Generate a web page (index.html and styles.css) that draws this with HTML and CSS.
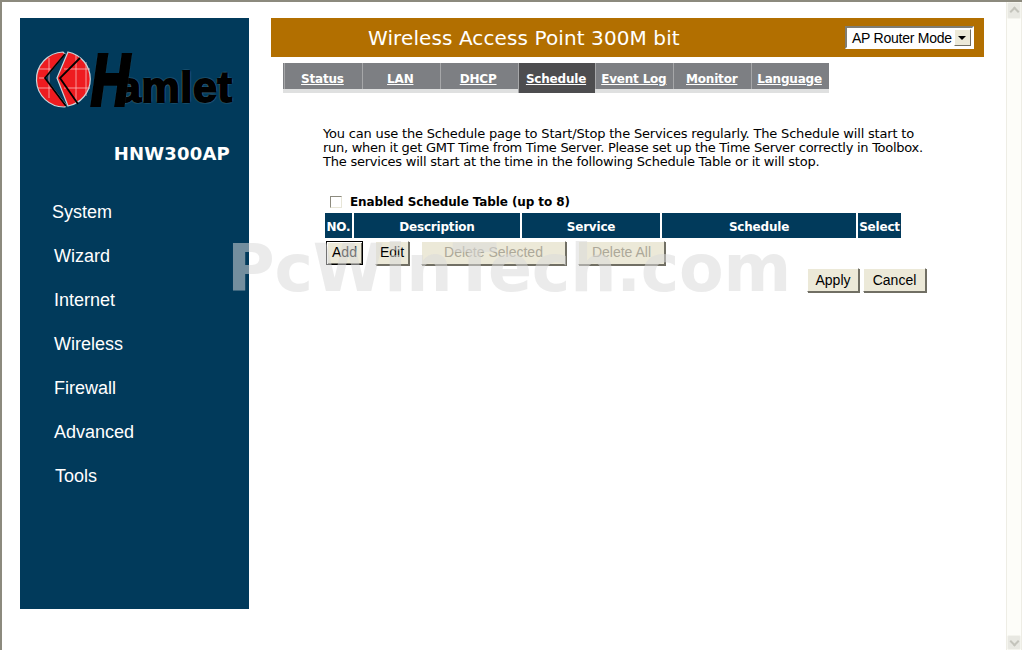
FILE: index.html
```html
<!DOCTYPE html>
<html lang="en">

<head>
    <meta charset="UTF-8">
    <meta name="viewport" content="width=device-width, initial-scale=1.0">
    <title>Schedule</title>
    <link rel="stylesheet" href="styles.css">
</head>

<body>
    <div class="page">
        <div class="left-bar">
            <div class="logo">
                <svg class="globe" width="60" height="62" viewBox="0 0 60 62">
                    <g fill="#ee1c20" stroke="#c9d6dc" stroke-width="1.2">
                        <path d="M28 2 A27.5 27.5 0 0 0 30 57 L31 55 L10 28 L30 4 Z"/>
                        <path d="M33 2 L22 28 L33 56 A27.5 27.5 0 0 0 33 2 Z"/>
                    </g>
                    <g fill="none" stroke="#f9b9b9" stroke-width="0.8">
                        <path d="M3 19 H16 M3 38 H17 M29 19 H55 M29 38 H55 M14 8 V48 M41 5 V53 M51 12 V46 M4 28 H9"/>
                    </g>
                    <path d="M30 4 L10 28 L31 56 M45 8 L25 28 L43 54" fill="none" stroke="#000" stroke-width="1.8"/>
                </svg>
                <span class="logo-h">H</span>
                <span class="logo-name">amlet</span>
            </div>
            <div class="model">HNW300AP</div>
            <ul class="menu">
                <li class="menu-first">System</li>
                <li>Wizard</li>
                <li>Internet</li>
                <li>Wireless</li>
                <li>Firewall</li>
                <li>Advanced</li>
                <li class="menu-last">Tools</li>
            </ul>
        </div>

        <div class="right-bar">
            <div class="title-bar">
                <div class="title">Wireless Access Point 300M bit</div>
                <div class="mode-select">
                    <span class="mode-text">AP Router Mode</span>
                    <span class="mode-arrow"></span>
                </div>
            </div>

            <div class="tabs">
                <a class="tab">Status</a>
                <a class="tab">LAN</a>
                <a class="tab">DHCP</a>
                <a class="tab active">Schedule</a>
                <a class="tab">Event Log</a>
                <a class="tab">Monitor</a>
                <a class="tab">Language</a>
            </div>

            <div class="content">
                <div class="intro">
                    <p class="line-1">You can use the Schedule page to Start/Stop the Services regularly. The Schedule will start to</p>
                    <p class="line-2">run, when it get GMT Time from Time Server. Please set up the Time Server correctly in Toolbox.</p>
                    <p class="line-3">The services will start at the time in the following Schedule Table or it will stop.</p>
                </div>

                <div class="enable">
                    <span class="check"></span>
                    <span class="enable-text">Enabled Schedule Table (up to 8)</span>
                </div>

                <table class="sched">
                    <tr>
                        <th class="c-no">NO.</th>
                        <th class="c-desc">Description</th>
                        <th class="c-serv">Service</th>
                        <th class="c-sched">Schedule</th>
                        <th class="c-sel">Select</th>
                    </tr>
                </table>

                <div class="btn-row">
                    <button class="btn btn-add">Add</button>
                    <button class="btn btn-edit">Edit</button>
                    <button class="btn btn-delsel off">Delete Selected</button>
                    <button class="btn btn-delall off">Delete All</button>
                </div>

                <div class="btn-row2">
                    <button class="btn btn-apply">Apply</button>
                    <button class="btn btn-cancel">Cancel</button>
                </div>
            </div>
        </div>
    </div>

    <div class="scrollbar">
        <div class="sb-btn sb-up"></div>
        <div class="sb-btn sb-down"></div>
    </div>

    <div class="watermark">PcWinTech.com</div>
</body>

</html>
```

FILE: styles.css
```css
* {
    padding: 0;
    margin: 0;
    box-sizing: border-box;
}

html,
body {
    height: 650px;
    overflow: hidden;
}

body {
    display: flex;
    background-color: #fff;
    border-top: 2px solid #8c8a7e;
    border-left: 2px solid #8c8a7e;
    font-family: "DejaVu Sans", Verdana, sans-serif;
    position: relative;
}

.page {
    flex: 1;
    display: flex;
    padding: 16px 0 0 18px;
}

.left-bar {
    width: 229px;
    height: 591px;
    background-color: #013a5b;
    flex-shrink: 0;
}

.logo {
    display: flex;
    margin: 32px 0 0 15px;
    height: 62px;
    font-family: "Liberation Sans", Arial, sans-serif;
    font-weight: bold;
    color: #000;
    text-shadow: 0 0 2px #d5e0e5, 0 0 2px #d5e0e5;
}

.globe {
    flex-shrink: 0;
}

.logo-h {
    font-size: 72px;
    line-height: 60px;
    font-style: italic;
    -webkit-text-stroke: 4px #000;
    transform: scaleX(0.74);
    transform-origin: left center;
    width: 26px;
    margin-left: -4px;
}

.logo-name {
    font-size: 43px;
    line-height: 62px;
    letter-spacing: 0.6px;
    -webkit-text-stroke: 2px #000;
    padding-top: 6px;
}

.model {
    margin-top: 31px;
    padding-right: 19px;
    text-align: right;
    color: #fff;
    font-size: 18px;
    letter-spacing: 0.2px;
    font-weight: bold;
    line-height: 22px;
}

.menu {
    list-style: none;
    margin-top: 35px;
}

.menu li {
    padding-left: 34px;
    height: 44px;
    line-height: 24px;
    color: #fff;
    font-family: "Liberation Sans", Arial, sans-serif;
    font-size: 18px;
}

.menu .menu-first {
    padding-left: 32px;
}

.menu .menu-last {
    padding-left: 35px;
}

.right-bar {
    width: 713px;
    margin-left: 22px;
}

.title-bar {
    height: 39px;
    background-color: #b26f00;
    display: flex;
    align-items: center;
    justify-content: space-between;
    padding: 0 10px 0 97px;
}

.title {
    color: #fff;
    font-size: 20px;
    letter-spacing: 0.1px;
}

.mode-select {
    width: 129px;
    height: 23px;
    background-color: #fff;
    border: 2px solid;
    border-color: #7f7d73 #fff #fff #7f7d73;
    display: flex;
    align-items: center;
    justify-content: space-between;
    padding: 0 1px 0 5px;
    font-family: "Liberation Sans", Arial, sans-serif;
    font-size: 14px;
    letter-spacing: -0.25px;
}

.mode-text {
    white-space: nowrap;
}

.mode-arrow {
    width: 17px;
    height: 17px;
    background-color: #ece9d8;
    border: 1px solid;
    border-color: #fff #716f64 #716f64 #fff;
    position: relative;
    flex-shrink: 0;
}

.mode-arrow::after {
    content: "";
    position: absolute;
    left: 3px;
    top: 6px;
    border: 4px solid transparent;
    border-top: 4px solid #000;
    border-bottom: 0;
}

.tabs {
    display: flex;
    width: 546px;
    height: 30px;
    margin: 6px 0 0 12px;
    background-color: #7d7f83;
    border-bottom: 4px solid #dfe0e0;
    padding-left: 1px;
}

.tab {
    width: 78px;
    height: 26px;
    line-height: 33px;
    padding-right: 2px;
    text-align: center;
    color: #fff;
    font-size: 12px;
    letter-spacing: -0.2px;
    font-weight: bold;
    text-decoration: underline;
    border-left: 1px solid #a6a7a9;
    white-space: nowrap;
}

.tab.active {
    background-color: #4d4d4f;
    height: 30px;
}

.intro {
    margin: 34px 0 0 52px;
    font-size: 13px;
    line-height: 14px;
    color: #000;
    white-space: nowrap;
}

.line-1 { letter-spacing: -0.18px; }
.line-2 { letter-spacing: -0.275px; }
.line-3 { letter-spacing: -0.23px; }

.enable {
    display: flex;
    align-items: center;
    margin: 24px 0 0 59px;
    height: 18px;
}

.check {
    width: 12px;
    height: 12px;
    border: 1px solid;
    border-color: #8c8a7e #e8e6d8 #e8e6d8 #8c8a7e;
    background-color: #fff;
}

.enable-text {
    margin-left: 8px;
    font-size: 12px;
    letter-spacing: -0.1px;
    font-weight: bold;
}

.sched {
    margin: 0 0 0 52px;
    border-collapse: separate;
    border-spacing: 2px;
    table-layout: fixed;
    width: 580px;
}

.sched th {
    height: 25px;
    padding: 2px 0 0;
    background-color: #013a5b;
    color: #fff;
    font-size: 12px;
    letter-spacing: -0.2px;
    font-weight: bold;
    white-space: nowrap;
}

.c-no { width: 27px; }
.c-desc { width: 166px; }
.c-serv { width: 138px; }
.c-sched { width: 194px; }
.c-sel { width: 43px; }

.btn-row {
    display: flex;
    gap: 12px;
    margin: 1px 0 0 55px;
}

.btn {
    height: 24px;
    background-color: #ece9d8;
    border: 1px solid;
    border-color: #fff #716f64 #716f64 #fff;
    box-shadow: 1px 1px 0 #716f64;
    font-family: "Liberation Sans", Arial, sans-serif;
    font-size: 14px;
    padding-bottom: 1px;
    color: #000;
}

.btn-row .btn {
    padding-bottom: 3px;
}

.btn-add {
    width: 37px;
    border-color: #000;
    box-shadow: inset 1px 1px 0 #fff, inset -1px -1px 0 #716f64;
}

.btn-edit { width: 34px; }
.btn-delsel { width: 145px; }
.btn-delall { width: 87px; }
.btn-apply { width: 52px; }
.btn-cancel { width: 63px; }

.off {
    color: #aca899;
}

.btn-row2 {
    display: flex;
    gap: 4px;
    margin: 3px 0 0 536px;
}

.scrollbar {
    width: 16px;
    height: 648px;
    flex-shrink: 0;
    background-color: #fdfdf9;
    border-left: 1px solid #eeede5;
    border-right: 1px solid #eeede5;
    display: flex;
    flex-direction: column;
    justify-content: space-between;
}

.sb-btn {
    height: 15px;
    background-color: #e8e8e2;
    border: 1px solid #f4f4ee;
    border-radius: 2px;
    position: relative;
}

.sb-up {
    height: 17px;
}

.sb-btn::after {
    content: "";
    position: absolute;
    left: 3px;
    width: 5px;
    height: 5px;
    border: solid #c4c4bc;
    border-width: 2px 0 0 2px;
}

.sb-up::after {
    top: 5px;
    transform: rotate(45deg);
}

.sb-down::after {
    top: 2px;
    transform: rotate(225deg);
}

/* sits over everything, also over the left bar */
.watermark {
    position: absolute;
    left: 225px;
    top: 232px;
    font-size: 65px;
    letter-spacing: -0.2px;
    line-height: 70px;
    font-weight: bold;
    color: rgba(217, 217, 217, 0.53);
    white-space: nowrap;
    pointer-events: none;
}
```
